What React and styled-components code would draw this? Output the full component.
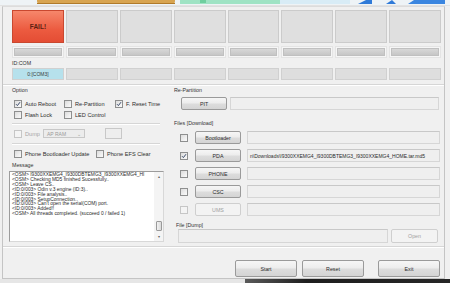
import * as React from "react";
import styled, { createGlobalStyle, css } from "styled-components";

const GlobalStyle = createGlobalStyle`
  html, body {
    margin: 0;
    padding: 0;
    background: #f0f0f0;
  }
  body {
    font-family: "Liberation Sans", Arial, sans-serif;
    color: #2b2b2b;
  }
`;

const Screen = styled.div`
  width: 450px;
  height: 283px;
  overflow: hidden;
  display: flex;
  flex-direction: column;
  background: #f0f0f0;
`;

const Banner = styled.svg`
  display: block;
  flex: none;
`;

const Window = styled.div`
  flex: none;
  height: 273px;
  margin: 0 5px 0 2px;
  border: 1px solid #c4c4c4;
  border-top-color: #dcdcdc;
  background: #f0f0f0;
  box-sizing: border-box;
  padding-top: 3px;
  display: flex;
  flex-direction: column;
`;

const Taskbar = styled.div`
  flex: none;
  height: 4px;
  display: grid;
  grid-template-columns: 245px 1fr;
  background: #e6e6e6;
`;

const TaskbarDark = styled.div`
  grid-column: 2;
  background: linear-gradient(90deg, #5a5a5a, #1e1e1e 30%, #262626);
`;

const SlotGrid = styled.div`
  margin-left: 9px;
  width: 429px;
  height: ${p => p.h}px;
  margin-top: ${p => p.mt || 0}px;
  display: grid;
  grid-template-columns: repeat(8, 1fr);
  gap: 2px;
`;

const StatusBox = styled.div`
  border: 1px solid #cbcbcb;
  background: #dfdfdf;
  display: flex;
  align-items: center;
  justify-content: center;
  font-size: 6.5px;
  font-weight: bold;
  color: #5c1f12;
  ${p =>
    p.fail &&
    css`
      border-color: #c9482f;
      background: linear-gradient(#f6876b, #ec5b40 60%, #e44d34);
    `}
`;

const ProgressCell = styled.div`
  border: 1px solid #e4e4e4;
  background: #f6f6f6;
  padding: 1px;
  display: flex;
`;

const ProgressBar = styled.div`
  flex: 1;
  border: 1px solid #c0c0c0;
  background: linear-gradient(#d8d8d8, #c6c6c6);
`;

const ComCell = styled.div`
  border: 1px solid #d0d0d0;
  background: ${p => (p.active ? "#b6e1ec" : "#dedede")};
  font-size: 5px;
  color: #3a3a3a;
  display: flex;
  align-items: center;
  justify-content: center;
`;

const Caption = styled.div`
  font-size: 5.3px;
  line-height: 7px;
  height: 7px;
  color: #333;
  margin-top: ${p => p.mt || 0}px;
  margin-left: ${p => p.ml || 0}px;
`;

const Divider = styled.div`
  margin-top: ${p => p.mt || 0}px;
  margin-left: ${p => p.ml || 0}px;
  width: ${p => (p.w ? `${p.w}px` : "auto")};
  height: 0;
  border-top: 1px solid #d6d6d6;
  border-bottom: 1px solid #ffffff;
`;

const Body = styled.div`
  display: flex;
`;

const LeftColumn = styled.div`
  width: 167px;
  flex: none;
  display: flex;
  flex-direction: column;
`;

const RightColumn = styled.div`
  flex: 1;
  display: flex;
  flex-direction: column;
`;

const OptionRow = styled.div`
  display: flex;
  align-items: center;
  height: ${p => p.h || 9}px;
  margin-top: ${p => p.mt || 0}px;
  margin-left: ${p => p.ml || 11}px;
`;

const CheckLabel = styled.label`
  display: flex;
  align-items: center;
  gap: 3px;
  width: ${p => (p.w ? `${p.w}px` : "auto")};
  font-size: 5.6px;
  color: ${p => (p.disabled ? "#a6a6a6" : "#2e2e2e")};
  white-space: nowrap;
`;

const Box = styled.span`
  width: 6px;
  height: 6px;
  flex: none;
  border: 1px solid ${p => (p.disabled ? "#c6c6c6" : "#8e8f8f")};
  background: ${p => (p.disabled ? "#f4f4f4" : "linear-gradient(135deg, #dcdcdc, #fbfbfb)")};
  display: flex;
  align-items: center;
  justify-content: center;
`;

const Check = ({ checked, disabled }) => (
  <Box disabled={disabled}>
    {checked && (
      <svg width="6" height="6" viewBox="0 0 6 6">
        <path d="M1 3.2 L2.4 4.6 L5 1.2" fill="none" stroke="#3a4a6a" strokeWidth="1" />
      </svg>
    )}
  </Box>
);

const Combo = styled.div`
  width: 42px;
  height: 9px;
  margin-left: 7px;
  border: 1px solid #c8c8c8;
  background: #ececec;
  font-size: 5px;
  color: #9a9a9a;
  display: flex;
  align-items: center;
  justify-content: space-between;
  padding: 0 3px;
  box-sizing: border-box;
`;

const SmallField = styled.div`
  width: 15px;
  height: 9px;
  margin-left: 20px;
  border: 1px solid #c8c8c8;
  background: #eeeeee;
`;

const MessageBox = styled.div`
  margin-left: 6px;
  margin-top: 2px;
  width: 155px;
  height: 71px;
  box-sizing: border-box;
  border: 1px solid #9c9c9c;
  border-right-color: #d8d8d8;
  border-bottom-color: #d8d8d8;
  background: #ffffff;
  display: flex;
`;

const MessageText = styled.div`
  flex: 1;
  min-width: 0;
  padding: 1px 0 0 2px;
  font-size: 4.9px;
  line-height: 4.9px;
  color: #2a2a2a;
  white-space: nowrap;
  overflow: hidden;
`;

const ScrollTrack = styled.div`
  width: 9px;
  flex: none;
  background: #f4f4f4;
  display: flex;
  flex-direction: column;
  align-items: center;
  justify-content: space-between;
  padding: 2px 0;
  box-sizing: border-box;
  font-size: 4px;
  color: #606060;
`;

const ScrollThumb = styled.div`
  width: 6px;
  height: 10px;
  margin-top: auto;
  margin-bottom: 3px;
  border: 1px solid #9a9a9a;
  border-radius: 1px;
  background: linear-gradient(90deg, #f2f2f2, #dadada);
  box-sizing: border-box;
`;

const FieldRow = styled.div`
  display: flex;
  align-items: center;
  height: ${p => p.h || 13}px;
  margin-top: ${p => p.mt || 0}px;
  margin-left: ${p => p.ml || 0}px;
`;

const Button = styled.div`
  width: ${p => p.w}px;
  height: ${p => p.h || 13}px;
  flex: none;
  margin-left: ${p => p.ml || 0}px;
  box-sizing: border-box;
  border: 1px solid ${p => (p.disabled ? "#cfcfcf" : "#9a9a9a")};
  border-radius: 2px;
  background: ${p =>
    p.disabled ? "#f3f3f3" : "linear-gradient(#f6f6f6, #ececec 48%, #dddddd 52%, #d4d4d4)"};
  font-size: 5.3px;
  color: ${p => (p.disabled ? "#a0a0a0" : "#2a2a2a")};
  display: flex;
  align-items: center;
  justify-content: center;
`;

const Field = styled.div`
  height: ${p => p.h || 13}px;
  margin-left: ${p => p.ml || 0}px;
  width: ${p => p.w}px;
  flex: none;
  box-sizing: border-box;
  border: 1px solid #d6d6d6;
  border-top-color: #c8c8c8;
  background: #efefef;
  font-size: 5px;
  color: #2a2a2a;
  display: flex;
  align-items: center;
  padding-left: 2px;
  white-space: nowrap;
  overflow: hidden;
`;

const ActionBar = styled.div`
  display: flex;
  margin-top: 12px;
  margin-left: 232px;
`;

const messages = [
  "<OSM> I9300XXEMG4_I9300DBTEMG3_I9300XXEMG4_HI",
  "<OSM> Checking MD5 finished Sucessfully..",
  "<OSM> Leave CS..",
  "<ID:0/003> Odin v.3 engine (ID:3)..",
  "<ID:0/003> File analysis..",
  "<ID:0/003> SetupConnection..",
  "<ID:0/003> Can't open the serial(COM) port.",
  "<ID:0/003> Added!!",
  "<OSM> All threads completed. (succeed 0 / failed 1)"
];

const files = [
  { name: "Bootloader", checked: false },
  { name: "PDA", checked: true, path: "n\\Downloads\\I9300XXEMG4_I9300DBTEMG3_I9300XXEMG4_HOME.tar.md5" },
  { name: "PHONE", checked: false },
  { name: "CSC", checked: false },
  { name: "UMS", checked: false, disabled: true }
];

const slots = Array.from({ length: 8 }, (_, i) => i);

export default function App() {
  return (
    <Screen>
      <GlobalStyle />
      <Banner width="450" height="6" viewBox="0 0 450 6">
        <rect width="450" height="6" fill="#eef3f6" />
        <rect x="37" y="-4" width="138" height="8" rx="3" fill="#d8a450" />
        <rect x="37" y="3" width="138" height="1" fill="#b07a2a" />
        <rect x="180" y="0" width="100" height="4" fill="#9fe3c4" />
        <rect x="200" y="0" width="6" height="3" fill="#6fcf9f" />
        <rect x="280" y="0" width="70" height="4" fill="#d8ecf6" />
        <path d="M358 4 L366 0 L372 0 L372 4 Z" fill="#2f7ad8" />
        <path d="M386 4 L392 0 L396 4 Z" fill="#2f7ad8" />
        <path d="M408 4 L414 0 L445 0 L445 4 Z" fill="#3b86e0" />
        <rect x="0" y="5" width="450" height="1" fill="#e2e2e2" />
      </Banner>
      <Window>
        <SlotGrid h={33}>
          {slots.map(i => (
            <StatusBox key={i} fail={i === 0}>
              {i === 0 ? "FAIL!" : null}
            </StatusBox>
          ))}
        </SlotGrid>
        <SlotGrid h={12} mt={3}>
          {slots.map(i => (
            <ProgressCell key={i}>
              <ProgressBar />
            </ProgressCell>
          ))}
        </SlotGrid>
        <Caption mt={2} ml={9}>ID:COM</Caption>
        <SlotGrid h={12} mt={1}>
          {slots.map(i => (
            <ComCell key={i} active={i === 0}>
              {i === 0 ? "0:[COM3]" : null}
            </ComCell>
          ))}
        </SlotGrid>
        <Divider mt={4} />
        <Body>
          <LeftColumn>
            <Caption mt={1} ml={9}>Option</Caption>
            <OptionRow mt={5}>
              <CheckLabel w={50}><Check checked />Auto Reboot</CheckLabel>
              <CheckLabel w={51}><Check />Re-Partition</CheckLabel>
              <CheckLabel><Check checked />F. Reset Time</CheckLabel>
            </OptionRow>
            <OptionRow mt={2}>
              <CheckLabel w={50}><Check />Flash Lock</CheckLabel>
              <CheckLabel><Check />LED Control</CheckLabel>
            </OptionRow>
            <Divider mt={4} ml={9} w={148} />
            <OptionRow h={11} mt={3}>
              <CheckLabel disabled w={22}><Check disabled />Dump</CheckLabel>
              <Combo>AP RAM<span>⌄</span></Combo>
              <SmallField />
            </OptionRow>
            <Divider mt={4} ml={9} w={148} />
            <OptionRow mt={4}>
              <CheckLabel w={82}><Check />Phone Bootloader Update</CheckLabel>
              <CheckLabel><Check />Phone EFS Clear</CheckLabel>
            </OptionRow>
            <Caption mt={4} ml={9}>Message</Caption>
            <MessageBox>
              <MessageText>
                {messages.map((m, i) => (
                  <div key={i}>{m}</div>
                ))}
              </MessageText>
              <ScrollTrack>
                <span>▴</span>
                <ScrollThumb />
                <span>▾</span>
              </ScrollTrack>
            </MessageBox>
          </LeftColumn>
          <RightColumn>
            <Caption mt={1} ml={4}>Re-Partition</Caption>
            <FieldRow mt={3} ml={11}>
              <Button w={46}>PIT</Button>
              <Field ml={3} w={209} />
            </FieldRow>
            <Caption mt={10} ml={4}>Files [Download]</Caption>
            {files.map((f, i) => (
              <FieldRow key={f.name} mt={i === 0 ? 4 : 5} ml={10}>
                <Check checked={f.checked} disabled={f.disabled} />
                <Button w={46} ml={7} disabled={f.disabled}>{f.name}</Button>
                <Field ml={6} w={193}>{f.path}</Field>
              </FieldRow>
            ))}
            <Caption mt={6} ml={6}>File [Dump]</Caption>
            <FieldRow h={14} mt={0} ml={8}>
              <Field h={14} w={210} />
              <Button w={47} h={14} ml={3} disabled>Open</Button>
            </FieldRow>
          </RightColumn>
        </Body>
        <Divider mt={3} />
        <ActionBar>
          <Button w={62} h={17}>Start</Button>
          <Button w={62} h={17} ml={5}>Reset</Button>
          <Button w={62} h={17} ml={14}>Exit</Button>
        </ActionBar>
      </Window>
      <Taskbar>
        <TaskbarDark />
      </Taskbar>
    </Screen>
  );
}
